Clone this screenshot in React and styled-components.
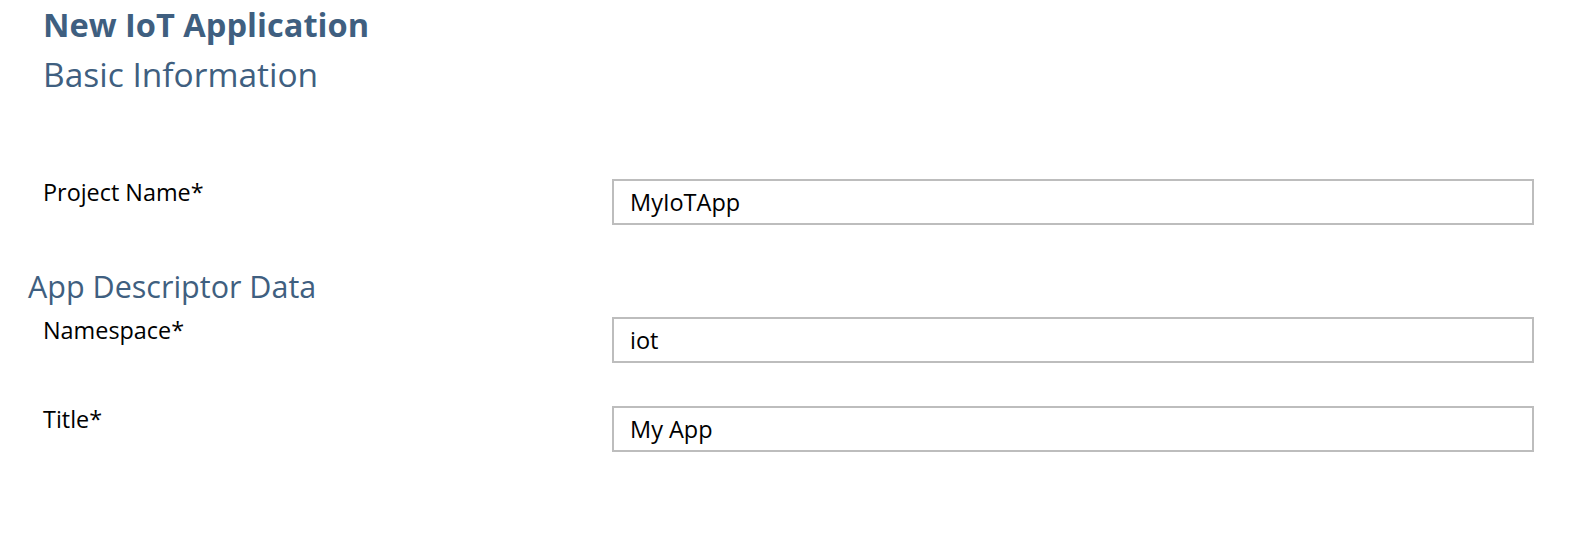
import React from 'react';
import styled, { createGlobalStyle } from 'styled-components';

const GlobalStyle = createGlobalStyle`
  body {
    margin: 0;
    background: #ffffff;
    font-family: 'Open Sans', 'Liberation Sans', Arial, sans-serif;
  }
`;

const Page = styled.div`
  width: 1592px;
  padding: 7px 58px 40px 0;
  box-sizing: border-box;
`;

const Header = styled.div`
  display: flex;
  flex-direction: column;
  gap: 11px;
  padding-left: 43px;
`;

const AppTitle = styled.h1`
  margin: 0;
  font-size: 32.6px;
  line-height: 36px;
  font-weight: 700;
  color: #3f5f80;
`;

const SectionTitle = styled.h2`
  margin: 0;
  margin-top: ${(p) => p.$top || 0}px;
  padding-left: ${(p) => p.$indent || 0}px;
  font-size: ${(p) => p.$size || 32}px;
  line-height: 40px;
  font-weight: 400;
  color: #3f5f80;
`;

const FormRow = styled.div`
  display: flex;
  align-items: flex-start;
  margin-top: ${(p) => p.$top}px;
  padding-left: 43px;
`;

const Label = styled.label`
  width: 569px;
  flex-shrink: 0;
  padding-top: 1px;
  font-size: 23.4px;
  line-height: 24px;
  color: #000000;
`;

const TextInput = styled.input`
  flex: 1;
  height: 46px;
  box-sizing: border-box;
  margin: 0;
  padding: 0 16px;
  border: 2px solid #bdbdbd;
  border-radius: 0;
  background: #ffffff;
  font-family: 'Open Sans', 'Liberation Sans', Arial, sans-serif;
  font-size: 23.5px;
  color: #000000;
  outline: none;
`;

const Field = ({ label, value, top }) => (
  <FormRow $top={top}>
    <Label>{label}</Label>
    <TextInput defaultValue={value} />
  </FormRow>
);

const App = () => {
  return (
    <React.Fragment>
      <GlobalStyle />
      <Page>
        <Header>
          <AppTitle>New IoT Application</AppTitle>
          <SectionTitle $size={33.5}>Basic Information</SectionTitle>
        </Header>
        <Field label="Project Name*" value="MyIoTApp" top={85} />
        <SectionTitle $top={41} $indent={28} $size={30.5}>
          App Descriptor Data
        </SectionTitle>
        <Field label="Namespace*" value="iot" top={11} />
        <Field label="Title*" value="My App" top={43} />
      </Page>
    </React.Fragment>
  );
};

export default App;
